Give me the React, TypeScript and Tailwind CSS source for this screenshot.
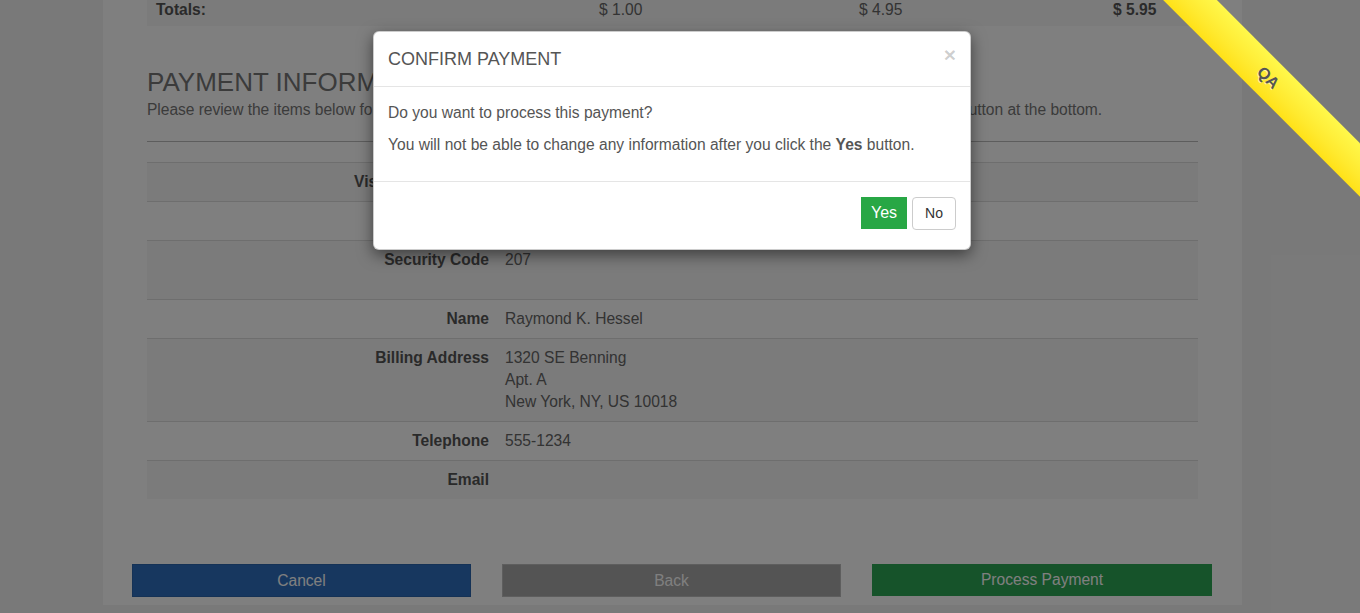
import React from "react";

// Rows of the payment review table
interface ReviewRow {
  label: string;
  value: string[];
  striped: boolean;
  extraSpace?: boolean;
}

const reviewRows: ReviewRow[] = [
  { label: "Visa Card Number", value: ["************1111"], striped: true },
  { label: "Expiration", value: ["12/2025"], striped: false },
  { label: "Security Code", value: ["207"], striped: true, extraSpace: true },
  { label: "Name", value: ["Raymond K. Hessel"], striped: false },
  {
    label: "Billing Address",
    value: ["1320 SE Benning", "Apt. A", "New York, NY, US 10018"],
    striped: true,
  },
  { label: "Telephone", value: ["555-1234"], striped: false },
  { label: "Email", value: [], striped: true },
];

const ConfirmModal = () => {
  return (
    <div className="absolute left-[373px] top-[31px] w-[598px] bg-white rounded-[6px] border border-black/20 shadow-[0_5px_15px_rgba(0,0,0,0.5)] text-[#555]">
      {/* Header */}
      <div className="flex items-start justify-between pl-[14px] pr-[15px] pt-[15px] pb-[14px] border-b border-[#e5e5e5]">
        <h4 className="text-[18px] leading-[25px]">CONFIRM PAYMENT</h4>
        <button className="text-[21px] leading-[21px] font-bold text-black/20 -mt-[3px] -mr-[1px]">
          ×
        </button>
      </div>

      {/* Body */}
      <div className="px-[14px] pt-[15px] pb-[15px] text-[15.6px] leading-[22px]">
        <p className="mb-[10px]">Do you want to process this payment?</p>
        <p className="mb-[10px]">
          You will not be able to change any information after you click the{" "}
          <b>Yes</b> button.
        </p>
      </div>

      {/* Footer */}
      <div className="flex justify-end gap-[5px] px-[14px] pt-[15px] pb-[19px] border-t border-[#e5e5e5]">
        <button className="w-[46px] h-[32px] bg-[#28a745] text-white text-[16px]">
          Yes
        </button>
        <button className="w-[44px] h-[33px] bg-white border border-[#ccc] rounded-[4px] text-[14px] text-[#333]">
          No
        </button>
      </div>
    </div>
  );
};

const QaRibbon = () => {
  return (
    <div className="absolute left-[1068px] top-[59px] w-[400px] h-[38px] rotate-45 bg-linear-to-b from-[#fff84a] to-[#ffe115] flex items-center justify-center">
      <span className="text-[16px] font-bold text-[#555] [text-shadow:0_1px_0_rgba(255,255,255,0.6)]">
        QA
      </span>
    </div>
  );
};

export default function App() {
  return (
    <div className="relative w-[1360px] h-[613px] overflow-hidden bg-[#f3f3f3] font-['Liberation_Sans',Arial,sans-serif] text-[#666]">
      <div className="ml-[103px] w-[1139px] h-full bg-white">
        <div className="px-[44px]">
          {/* Totals row of the order table */}
          <div className="-mt-[8px] grid grid-cols-[444px_260px_254px_1fr] bg-[#f6f6f6] text-[15.6px] leading-[22px] pt-[7px] pb-[5px]">
            <div className="pl-[9px] font-bold text-[#555]">Totals:</div>
            <div className="pl-2">$ 1.00</div>
            <div className="pl-2">$ 4.95</div>
            <div className="pl-2 font-bold text-[#555]">$ 5.95</div>
          </div>

          {/* Payment information */}
          <h2 className="mt-[42px] text-[26px] leading-[29px] text-[#777]">
            PAYMENT INFORMATION
          </h2>
          <p className="mt-[2px] text-[15.6px] leading-[22px] text-[#777] whitespace-nowrap tracking-[-0.05px]">
            Please review the items below for accuracy before submitting them.
            If everything is correct, click the Process Payment button at the
            bottom.
          </p>
          <hr className="mt-[20px] border-t border-[#bbb]" />

          <div className="mt-[20px] text-[15.6px] leading-[22px]">
            {reviewRows.map((row) => (
              <div
                key={row.label}
                className={`flex border-t border-[#ddd] ${
                  row.striped ? "bg-[#f6f6f6]" : "bg-white"
                }`}
              >
                <div
                  className={`w-[350px] px-2 pt-2 text-right font-bold text-[#555] ${
                    row.extraSpace ? "pb-[28px]" : "pb-2"
                  }`}
                >
                  {row.label}
                </div>
                <div className="flex-1 px-2 py-2">
                  {row.value.length === 0 && <span>&nbsp;</span>}
                  {row.value.map((line) => (
                    <div key={line}>{line}</div>
                  ))}
                </div>
              </div>
            ))}
          </div>
        </div>

        {/* Action buttons */}
        <div className="mt-[65px] pl-[29px] flex items-start gap-[31px] text-[15.6px] text-white">
          <button className="w-[339px] h-[33px] bg-[#2f6fbf] border border-[#2a64ad]">
            Cancel
          </button>
          <button className="w-[339px] h-[33px] bg-[#a8a8a8] border border-[#bdbdbd]">
            Back
          </button>
          <button className="w-[340px] h-[32px] bg-[#2ca654]">
            Process Payment
          </button>
        </div>
      </div>

      {/* Backdrop */}
      <div className="absolute inset-0 bg-black/50" />

      <ConfirmModal />
      <QaRibbon />
    </div>
  );
}
